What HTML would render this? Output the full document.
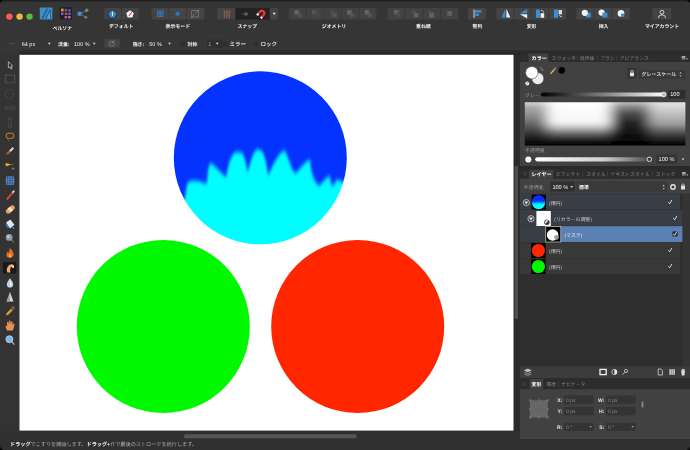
<!DOCTYPE html>
<html lang="ja">
<head>
<meta charset="utf-8">
<title>Affinity Photo</title>
<style>
html,body{margin:0;padding:0;background:#323232;}
body{width:690px;height:450px;overflow:hidden;position:relative;font-family:"Liberation Sans","Noto Sans CJK JP",sans-serif;}
svg{position:absolute;left:0;top:0;display:block;}
text{font-family:"Liberation Sans","Noto Sans CJK JP",sans-serif;text-rendering:geometricPrecision;}
svg{will-change:transform;}
.lbl{font-size:4.9px;fill:#f2f2f2;font-weight:700;text-anchor:middle;}
.opt{font-size:5.5px;fill:#f4f4f4;}
.optb{font-size:4.9px;fill:#f4f4f4;font-weight:700;}
.tab{font-size:4.9px;fill:#808080;}
.taba{font-size:5.1px;fill:#ffffff;font-weight:700;}
.dim{font-size:4.9px;fill:#9a9a9a;}
.lay{font-size:4.9px;fill:#c4c4c4;}
.val{font-size:5.6px;fill:#f6f6f6;}
.fld{font-size:5px;fill:#8c8c8c;}
.flb{font-size:5px;fill:#e8e8e8;font-weight:700;text-anchor:end;}
</style>
</head>
<body>
<svg width="690" height="450" viewBox="0 0 690 450">
<defs>
<filter id="soft" x="-10%" y="-10%" width="120%" height="120%"><feGaussianBlur stdDeviation="0.9 2.3"/></filter>
<mask id="cblue" maskUnits="userSpaceOnUse" x="170" y="68" width="182" height="180"><circle cx="260.3" cy="157.8" r="86.5" fill="#fff"/></mask>
<linearGradient id="gslide" x1="0" x2="1"><stop offset="0" stop-color="#000"/><stop offset="1" stop-color="#fff"/></linearGradient>
<linearGradient id="gop" x1="0" x2="1"><stop offset="0" stop-color="#fff"/><stop offset="0.6" stop-color="#cfcfcf"/><stop offset="1" stop-color="#4a4a4a"/></linearGradient>
<linearGradient id="gh" x1="0" x2="1">
<stop offset="0" stop-color="#8a8a8a"/><stop offset="0.08" stop-color="#a8a8a8"/><stop offset="0.17" stop-color="#f4f4f4"/><stop offset="0.5" stop-color="#f6f6f6"/><stop offset="0.58" stop-color="#a0a0a0"/><stop offset="0.66" stop-color="#585858"/><stop offset="0.74" stop-color="#8a8a8a"/><stop offset="0.85" stop-color="#c8c8c8"/><stop offset="1" stop-color="#e8e8e8"/>
</linearGradient>
<linearGradient id="gv" x1="0" y1="0" x2="0" y2="1">
<stop offset="0" stop-color="#000" stop-opacity="0"/><stop offset="0.45" stop-color="#000" stop-opacity="0.08"/><stop offset="0.7" stop-color="#000" stop-opacity="0.5"/><stop offset="0.9" stop-color="#000" stop-opacity="0.92"/><stop offset="1" stop-color="#000" stop-opacity="1"/>
</linearGradient>
<linearGradient id="gtop" x1="0" y1="0" x2="0" y2="1"><stop offset="0" stop-color="#fff" stop-opacity="0.9"/><stop offset="1" stop-color="#fff" stop-opacity="0"/></linearGradient>
<linearGradient id="gshadow" x1="0" y1="0" x2="0" y2="1"><stop offset="0" stop-color="#2f2f2f"/><stop offset="1" stop-color="#242424"/></linearGradient>
<clipPath id="gbox"><rect x="524.8" y="102.3" width="160.6" height="43.3"/></clipPath>
<filter id="hblur" filterUnits="userSpaceOnUse" x="490" y="98" width="230" height="52"><feGaussianBlur stdDeviation="6.5 0.8"/></filter>
<linearGradient id="colA" gradientUnits="userSpaceOnUse" x1="0" y1="102.3" x2="0" y2="145.6"><stop offset="0" stop-color="#d4d4d4"/><stop offset="0.12" stop-color="#a8a8a8"/><stop offset="0.35" stop-color="#868686"/><stop offset="0.6" stop-color="#505050"/><stop offset="0.85" stop-color="#1a1a1a"/><stop offset="1" stop-color="#000"/></linearGradient>
<linearGradient id="colB" gradientUnits="userSpaceOnUse" x1="0" y1="102.3" x2="0" y2="145.6"><stop offset="0" stop-color="#ffffff"/><stop offset="0.45" stop-color="#f6f6f6"/><stop offset="0.58" stop-color="#c4c4c4"/><stop offset="0.75" stop-color="#5a5a5a"/><stop offset="0.92" stop-color="#101010"/><stop offset="1" stop-color="#000"/></linearGradient>
<linearGradient id="colC" gradientUnits="userSpaceOnUse" x1="0" y1="102.3" x2="0" y2="145.6"><stop offset="0" stop-color="#c0c0c0"/><stop offset="0.1" stop-color="#8a8a8a"/><stop offset="0.28" stop-color="#484848"/><stop offset="0.5" stop-color="#222222"/><stop offset="0.75" stop-color="#101010"/><stop offset="1" stop-color="#000"/></linearGradient>
<linearGradient id="colD" gradientUnits="userSpaceOnUse" x1="0" y1="102.3" x2="0" y2="145.6"><stop offset="0" stop-color="#e4e4e4"/><stop offset="0.25" stop-color="#c2c2c2"/><stop offset="0.5" stop-color="#9c9c9c"/><stop offset="0.72" stop-color="#4a4a4a"/><stop offset="0.92" stop-color="#101010"/><stop offset="1" stop-color="#000"/></linearGradient>
<linearGradient id="thumb1" x1="0" y1="0" x2="0" y2="1"><stop offset="0" stop-color="#0433ff"/><stop offset="0.42" stop-color="#0433ff"/><stop offset="0.62" stop-color="#00e0ff"/><stop offset="0.7" stop-color="#00fdff"/><stop offset="1" stop-color="#00fdff"/></linearGradient>
</defs>

<!-- ===== base backgrounds ===== -->
<rect x="0" y="0" width="690" height="450" fill="#353535"/>
<rect x="0" y="0" width="690" height="1.6" fill="#222"/>
<rect x="0" y="34" width="690" height="16" fill="#363636"/>
<rect x="19.5" y="50" width="500.5" height="381" fill="#2a2a2a"/>
<rect x="19.5" y="50" width="670.5" height="5" fill="url(#gshadow)"/>
<rect x="0" y="55" width="19.5" height="376" fill="#333333"/>
<rect x="0" y="431" width="690" height="19" fill="#303030"/>

<!-- ===== canvas ===== -->
<g id="canvas">
<rect x="19.5" y="54.8" width="494" height="375.8" fill="#ffffff"/>
<g mask="url(#cblue)">
<rect x="170" y="68" width="182" height="180" fill="#0433ff"/>
<path filter="url(#soft)" fill="#00fdff" d="M160,260 L160,200 L184.6,200 L185.8,192 L187.6,182.5 L192,180.4 L199,181 L206.6,184 L208.2,169 L210.6,162.4 L216.4,167.8 L222,173.4 L225.9,177 L229.4,161.7 L232.6,155 L235.4,152 L242.3,152.8 L245.4,160.3 L247.5,172 L251,160 L254.4,152 L257.3,149 L262.7,151.6 L266,161.7 L268.2,175 L274.6,161.7 L280.2,153.6 L284.7,150 L288.4,158.8 L292,169 L295.6,173.4 L302,166 L306.4,161.6 L310,159.4 L311,169 L313.8,179 L318.8,186 L325.4,179 L329.7,175.4 L331,183.5 L332.8,186 L337,179.6 L342.7,182 L360,181 L360,260 Z"/>
</g>
<circle cx="163.3" cy="326.5" r="86.5" fill="#00f900"/>
<circle cx="357.7" cy="326.5" r="86.5" fill="#ff2600"/>
</g>

<g id="toolbar">
<!-- window corners -->
<path d="M0,0 H4 Q0.5,0.5 0,4 Z" fill="#000"/>
<path d="M690,0 H686 Q689.5,0.5 690,4 Z" fill="#000"/>
<path d="M0,450 H4 Q0.5,449.5 0,446 Z" fill="#000"/>
<path d="M690,450 H686 Q689.5,449.5 690,446 Z" fill="#000"/>
<!-- traffic lights -->
<circle cx="9.4" cy="16.6" r="3.2" fill="#fc5b57"/>
<circle cx="19.6" cy="16.6" r="3.2" fill="#e5bf3c"/>
<circle cx="29.5" cy="16.6" r="3.2" fill="#57c038"/>
<!-- persona icons -->
<rect x="39.8" y="7.4" width="12.6" height="12.2" rx="0.8" fill="#3f8ec6"/>
<path d="M41.2,18.6 L46.4,8.4 L48.4,8.4 L43.4,18.6 Z M45,18.6 L49.6,9.4 L51,9.4 L51,18.6 Z" fill="#27679a"/>
<path d="M46.6,18.6 L50,12 L50,18.6 Z" fill="#5aa6dc"/>
<rect x="59.8" y="7.2" width="12.2" height="12.4" rx="0.8" fill="#1f1f25"/>
<rect x="61" y="8.6" width="2.6" height="2.8" fill="#e8963a"/>
<rect x="64.6" y="8.8" width="2.6" height="2.6" fill="#5b5ec2"/>
<rect x="68.2" y="9.2" width="2.4" height="2.4" fill="#8a4fb0"/>
<rect x="61" y="12.4" width="2.6" height="2.6" fill="#7a58c0"/>
<rect x="64.8" y="12.4" width="2.6" height="2.6" fill="#d8453c"/>
<rect x="68.4" y="12.6" width="2.4" height="2.4" fill="#5668c8"/>
<rect x="64.6" y="16" width="2.6" height="2.4" fill="#b05aa8"/>
<rect x="68.2" y="16" width="2.4" height="2.4" fill="#d06a9a"/>
<path d="M79.6,13.8 L86.6,10.4 M79.6,13.8 L85.8,17.2" stroke="#6f7a80" stroke-width="0.8" fill="none"/>
<circle cx="79.6" cy="13.8" r="2.3" fill="#4a8dc4"/>
<circle cx="86.7" cy="10.3" r="1.7" fill="#7c8a7a"/>
<circle cx="85.9" cy="17.2" r="1.5" fill="#6c7680"/>
<text class="lbl" x="62.3" y="30.3">ペルソナ</text>

<!-- default group -->
<rect x="104.4" y="8" width="16.6" height="11.6" rx="1.2" fill="#444"/>
<rect x="121.8" y="8" width="16.7" height="11.6" rx="1.2" fill="#444"/>
<path d="M112.5,9.7 L116.9,12.9 L115.2,18.0 L109.8,18.0 L108.1,12.9 Z" fill="#3b8ad0" stroke="#1c2a3a" stroke-width="0.8" stroke-linejoin="round"/>
<rect x="112" y="11.8" width="1" height="4.2" rx="0.5" fill="#e8f2ff"/>
<path d="M130.0,9.7 L134.4,12.9 L132.7,18.0 L127.3,18.0 L125.6,12.9 Z" fill="#f0f0f4" stroke="#22222c" stroke-width="0.8" stroke-linejoin="round"/>
<path d="M128.4,15.8 L131.4,12 L132.2,12.7 L129.3,16.4 Z" fill="#e0584e"/>
<text class="lbl" x="121.2" y="27.7">デフォルト</text>

<!-- view mode group -->
<rect x="151.5" y="8" width="17.2" height="11.6" rx="1.2" fill="#444"/>
<rect x="169.1" y="8" width="17.2" height="11.6" fill="#444"/>
<rect x="186.7" y="8" width="17.6" height="11.6" rx="1.2" fill="#444"/>
<g stroke="#3a7fc0" stroke-width="0.8" fill="none">
<rect x="157.6" y="11" width="5.4" height="5.4" fill="#2b5a86"/>
<path d="M160.3,11 V16.4 M157.6,13.7 H163" />
</g>
<g stroke="#4a6784" stroke-width="0.5" stroke-dasharray="0.7 0.7" fill="none"><path d="M157.6,9 V18.6 M163,9 V18.6 M155.4,11 H165.2 M155.4,16.4 H165.2"/></g>
<path d="M177.6,11 L180.4,13.8 L177.6,16.6 L174.8,13.8 Z" fill="#3573ac"/>
<g stroke="#46607a" stroke-width="0.5" stroke-dasharray="0.7 0.7" fill="none"><path d="M173.6,9.4 V18.4 M181.6,9.4 V18.4 M172.4,10.4 H182.8 M172.4,17.2 H182.8"/></g>
<g stroke="#8c8c8c" stroke-width="0.6" fill="none"><rect x="191.8" y="10.6" width="6.6" height="6.4"/><path d="M190.6,18.2 L199.6,9.4"/></g>
<text class="lbl" x="177.8" y="27.7">表示モード</text>

<!-- snap group -->
<rect x="217.2" y="8" width="18" height="11.6" rx="1.2" fill="#444"/>
<rect x="235.6" y="8" width="34" height="11.6" fill="#222"/>
<rect x="270" y="8" width="8.2" height="11.6" rx="1.2" fill="#444"/>
<g stroke-width="0.8" fill="none"><path d="M224.4,10 V18 M229.4,10 V18" stroke="#d6504a"/><path d="M226.9,10 V18" stroke="#8e8e8e"/><path d="M223,12.4 H231 M223,15.6 H231" stroke="#7a5a5a" stroke-width="0.5"/></g>
<path d="M242,14 H244.4" stroke="#777" stroke-width="0.6"/><rect x="244.6" y="12.6" width="3" height="2.8" fill="#6a6a6a"/>
<g transform="translate(261.4,13.8) rotate(40)">
<path d="M-3.6,3.6 V-0.6 A3.6,3.6 0 0 1 3.6,-0.6 V3.6 H1.3 V-0.6 A1.3,1.3 0 0 0 -1.3,-0.6 V3.6 Z" fill="#e03a34"/>
<rect x="-3.6" y="2" width="2.3" height="1.8" fill="#f4f4f4"/><rect x="1.3" y="2" width="2.3" height="1.8" fill="#f4f4f4"/>
</g>
<path d="M272.6,12.8 H275.8 L274.2,15 Z" fill="#e8e8e8"/>
<text class="lbl" x="247.3" y="27.7">スナップ</text>

<!-- geometry group -->
<rect x="288.7" y="8" width="87.7" height="11.6" rx="1.2" fill="#424242"/>
<g stroke="#323232" stroke-width="0.5"><path d="M306.2,8 V19.6 M323.8,8 V19.6 M341.3,8 V19.6 M358.9,8 V19.6"/></g>
<g fill="#666666">
<rect x="294.6" y="10.2" width="4.4" height="4.4"/><rect x="297.4" y="13" width="4.2" height="4.2" fill="#525252"/>
<rect x="312" y="10.2" width="4.4" height="4.4" fill="#555"/><rect x="314.8" y="13" width="4.2" height="4.2" fill="#484848"/>
<rect x="329.8" y="10.4" width="4.2" height="4.2" fill="#4c4c4c"/><rect x="332.4" y="13" width="4.2" height="4.2" fill="#565656"/>
<rect x="347.2" y="10.2" width="4.4" height="4.4"/><rect x="350" y="13" width="4.2" height="4.2" fill="#545454"/>
<rect x="364.8" y="10.2" width="4.4" height="4.4"/><rect x="367.6" y="13" width="4.2" height="4.2" fill="#545454"/>
</g>
<text class="lbl" x="334" y="27.7">ジオメトリ</text>

<!-- order group -->
<rect x="387.4" y="8" width="71" height="11.6" rx="1.2" fill="#424242"/>
<g stroke="#323232" stroke-width="0.5"><path d="M405.2,8 V19.6 M422.9,8 V19.6 M440.6,8 V19.6"/></g>
<g fill="#606060">
<rect x="394" y="10" width="4.6" height="4.6"/><rect x="396.6" y="12.8" width="4.2" height="4.2" fill="#4c4c4c"/>
<rect x="411.6" y="10.4" width="4.2" height="4.2" fill="#4c4c4c"/><rect x="414" y="12.8" width="4.4" height="4.4"/>
<rect x="429" y="12.6" width="5" height="5"/><rect x="428.4" y="10" width="3" height="3" fill="#4c4c4c"/>
<rect x="447.2" y="11" width="4.8" height="4.8"/>
</g>
<text class="lbl" x="423.4" y="27.7">重ね順</text>

<!-- align group -->
<rect x="468" y="8" width="18.2" height="11.6" rx="1.2" fill="#444"/>
<rect x="473.6" y="9.4" width="0.9" height="8.4" fill="#f0f0f0"/>
<rect x="474.6" y="10.2" width="6.8" height="2.4" fill="#3d8dd2"/>
<rect x="474.6" y="13.6" width="4.4" height="2.2" fill="#3d8dd2"/>
<text class="lbl" x="477.4" y="27.7">整列</text>

<!-- transform group -->
<rect x="496.4" y="8" width="69.8" height="11.6" rx="1.2" fill="#444"/>
<g stroke="#323232" stroke-width="0.5"><path d="M513.9,8 V19.6 M531.4,8 V19.6 M548.8,8 V19.6"/></g>
<path d="M501.4,17.6 L505.4,8.8 L505.4,17.6 Z" fill="#3d8dd2"/><path d="M506.4,17.6 L506.4,8.8 L510.4,17.6 Z" fill="#f0f0f0"/>
<path d="M527.2,9 L527.2,13.2 L519.8,13.2 Z" fill="#3d8dd2"/><path d="M527.2,14.2 L527.2,18.4 L519.8,14.2 Z" fill="#f0f0f0"/>
<rect x="536" y="9.6" width="4" height="8.2" fill="#3d8dd2"/><rect x="540.6" y="13.2" width="3.6" height="4.6" fill="#f0f0f0"/><path d="M541,10.4 Q543.6,10.4 543.6,12.6" stroke="#f0f0f0" stroke-width="0.7" fill="none"/>
<rect x="554" y="9.6" width="4" height="8.2" fill="#3d8dd2"/><rect x="558.6" y="10" width="3.4" height="4.4" fill="#dcdcdc"/><path d="M562,16.8 Q559.4,16.8 559.4,15" stroke="#f0f0f0" stroke-width="0.7" fill="none"/>
<text class="lbl" x="531.6" y="27.7">変形</text>

<!-- insert group -->
<rect x="576.4" y="8" width="53.5" height="11.6" rx="1.2" fill="#444"/>
<g stroke="#323232" stroke-width="0.5"><path d="M594.2,8 V19.6 M612,8 V19.6"/></g>
<rect x="586" y="12.6" width="4.8" height="4.8" fill="#3d8dd2"/><circle cx="584.8" cy="12.8" r="3.1" fill="#f4f4f4"/>
<circle cx="601.6" cy="12.6" r="3.1" fill="#f4f4f4"/><rect x="602.4" y="12.6" width="5" height="5" fill="#3d8dd2"/>
<circle cx="621" cy="13.4" r="3.3" fill="#f4f4f4"/><rect x="621" y="13.6" width="3.2" height="3.4" fill="#3d8dd2"/>
<text class="lbl" x="603.6" y="27.7">挿入</text>

<!-- account -->
<rect x="652.3" y="8" width="18.9" height="11.6" rx="1.2" fill="#444"/>
<g stroke="#f0f0f0" stroke-width="0.8" fill="none"><circle cx="662" cy="12.2" r="1.9"/><path d="M658.4,18 Q658.6,14.8 662,14.8 Q665.4,14.8 665.6,18"/></g>
<text class="lbl" x="662" y="27.7">マイアカウント</text>
</g>

<g id="options">
<path d="M9.4,43.7 H15.4" stroke="#5a5a5a" stroke-width="0.7"/>
<text class="opt" x="21.7" y="45.9">64 px</text>
<path d="M47.9,42.8 H50.7 L49.3,44.8 Z" fill="#d8d8d8"/>
<text class="optb" x="58" y="45.8">流量:</text>
<text class="opt" x="74" y="45.9">100 %</text>
<path d="M92.8,42.8 H95.6 L94.2,44.8 Z" fill="#d8d8d8"/>
<rect x="104.4" y="39" width="15.2" height="8.8" rx="1" fill="#444"/>
<g stroke="#8a8a8a" stroke-width="0.7" fill="none"><circle cx="111.6" cy="43.8" r="2.6"/><path d="M111.4,44 L114.6,40.2"/></g>
<text class="optb" x="132.7" y="45.8">強さ:</text>
<text class="opt" x="149.3" y="45.9">50 %</text>
<path d="M168.2,42.8 H171 L169.6,44.8 Z" fill="#d8d8d8"/>
<rect x="180.6" y="41.2" width="4.8" height="4.8" rx="0.8" fill="#2f2f2f"/>
<text class="optb" x="187.6" y="45.8">対称</text>
<rect x="207" y="39.6" width="15" height="8.4" fill="#2f2f2f"/>
<text class="opt" x="208.2" y="45.9" style="fill:#9a9a9a">1</text>
<path d="M215.8,42.8 H218.6 L217.2,44.8 Z" fill="#d8d8d8"/>
<rect x="222.8" y="41.2" width="4.8" height="4.8" rx="0.8" fill="#2f2f2f"/>
<text class="opt" x="229.4" y="45.8" style="font-weight:500">ミラー</text>
<rect x="253.4" y="41.2" width="4.8" height="4.8" rx="0.8" fill="#2f2f2f"/>
<text class="opt" x="260.4" y="45.8" style="font-weight:500">ロック</text>
</g>

<g id="tools">
<!-- 1 arrow -->
<path d="M8.4,61.6 L8.4,68 L9.9,66.7 L11,69 L12,68.6 L10.9,66.3 L12.8,66.1 Z" fill="#2a2a2a" stroke="#d0d0d0" stroke-width="0.7"/>
<!-- 2 rect marquee -->
<rect x="5.6" y="75.2" width="9" height="7.6" fill="none" stroke="#8a8a8a" stroke-width="0.6" stroke-dasharray="1 0.8"/>
<!-- 3 ellipse marquee -->
<circle cx="9.8" cy="94" r="4.3" fill="none" stroke="#5e5e5e" stroke-width="0.7" stroke-dasharray="1 0.7"/>
<!-- 4 row marquee -->
<rect x="5.4" y="107" width="9.4" height="2" fill="none" stroke="#777" stroke-width="0.55" stroke-dasharray="1 0.7"/>
<!-- 5 col marquee -->
<rect x="8.8" y="118.4" width="2.4" height="9.4" fill="none" stroke="#777" stroke-width="0.55" stroke-dasharray="1 0.7"/>
<!-- 6 lasso -->
<ellipse cx="10" cy="135.8" rx="3.8" ry="2.7" fill="none" stroke="#b26e30" stroke-width="1.2"/>
<path d="M8,138.4 Q7.4,140.4 9,140.8" stroke="#a8642a" stroke-width="0.7" fill="none"/>
<!-- 7 brush -->
<path d="M6,154.6 Q6.4,151.6 9.2,150.6 L10.6,152 Q9.6,154.8 6,154.6 Z" fill="#9a5f34"/>
<path d="M9.2,150.6 L12.6,147 L14,148.4 L10.6,152 Z" fill="#e6d6c4"/>
<!-- 8 wand -->
<path d="M5.6,163 L11.4,164.4 L5.8,166.4 Z" fill="#e6b030"/>
<path d="M11.4,164.4 L13.2,164.6" stroke="#b08a2a" stroke-width="0.7"/>
<path d="M13,167.4 V170 M11.7,168.7 H14.3" stroke="#6a9ae0" stroke-width="0.7"/>
<!-- 9 mesh -->
<g stroke="#5b8fd8" stroke-width="0.8" fill="none"><rect x="6.4" y="177" width="7.2" height="7.2" fill="#2e4668"/><path d="M8.8,176 V185.2 M11.2,176 V185.2 M5.4,179.4 H14.6 M5.4,181.8 H14.6"/></g>
<!-- 10 red brush -->
<path d="M6.2,198.6 L11.6,192.2 L13.2,193.6 L8,199.8 Q6.6,200.2 6.2,198.6 Z" fill="#d2413c"/>
<path d="M11.6,192.2 L13.6,190 L14.8,191.2 L13.2,193.6 Z" fill="#f0c8c0"/>
<!-- 11 bandage -->
<g transform="translate(10.3,209.5) rotate(-40)"><rect x="-5.2" y="-2.4" width="10.4" height="4.8" rx="2.4" fill="#e6a45e"/><rect x="-1.6" y="-2.4" width="3.2" height="4.8" fill="#f4e0c8"/></g>
<!-- 12 bucket -->
<path d="M6,222.4 L10.4,219.6 L14.4,224.8 L10,228.4 Z" fill="#dfe6ee"/>
<path d="M6,222.4 L8.4,226.6 L10,228.4 L7,227.6 Q5.2,225 6,222.4 Z" fill="#3d7cc4"/>
<path d="M11.6,226.8 Q14.4,226.4 14.4,229 Q13.2,229.6 11.6,226.8 Z" fill="#4a8ad0"/>
<!-- 13 lens -->
<circle cx="9.2" cy="237.4" r="3.4" fill="#8e9aa6"/><circle cx="8.4" cy="236.6" r="1.6" fill="#b8c4d0"/>
<path d="M11.6,240 L13.8,242.4" stroke="#7a7a7a" stroke-width="1.1"/>
<!-- 14 flame -->
<path d="M10,248 Q13.8,251.4 13.6,254.6 Q13.4,257.6 10,257.8 Q6.4,257.6 6.4,254.4 Q6.6,252.4 8,251.2 Q8.4,252.8 9.2,253 Q9,250 10,248 Z" fill="#ee6a1e"/>
<path d="M10,253.4 Q11.8,255 11.4,256.6 Q10.8,257.6 10,257.6 Q8.6,257.4 8.6,256 Q8.8,254.6 10,253.4 Z" fill="#f8b24a"/>
<!-- 15 smudge (selected) -->
<rect x="2.8" y="262.2" width="13.6" height="11.4" rx="1" fill="#191919"/>
<path d="M7.2,272.6 Q6,268.8 8.2,266 Q10.2,263.6 12.8,264.6 Q14.6,265.6 14,267.6 Q13.2,268.4 12.2,267.6 Q11.4,266.6 10.6,267.6 Q9.8,269.4 10.4,272.6 Z" fill="#f0a878"/>
<path d="M12.2,264.6 Q14.4,265.2 14,267.4 Q13.2,268.2 12.4,267.4 Q13,266 12.2,264.6 Z" fill="#fbe4d4"/>
<!-- 16 droplet -->
<path d="M10,278.2 Q13.4,282.6 13.2,284.8 Q13,287.6 10,287.6 Q7,287.6 6.8,284.8 Q6.6,282.6 10,278.2 Z" fill="#c2d2e2"/>
<path d="M10,280.4 Q11.8,283.2 11.6,284.8 Q11.2,286.2 10,286.2 Z" fill="#eef4fa"/>
<!-- 17 cone -->
<path d="M10,292 L13.4,301.4 L6.6,301.4 Z" fill="#d4dae0"/>
<path d="M10,292 L10,301.4 L6.6,301.4 Z" fill="#9aa4ae"/>
<!-- 18 eyedropper -->
<path d="M6,315.4 L6.6,313.2 L11,308.8 L12.6,310.4 L8.2,314.8 Z" fill="#d9a43a"/>
<path d="M10.6,308.4 L12.4,306.4 Q13.8,305.6 14.6,306.6 Q15.2,307.6 14.4,308.8 L12.8,310.8 Z" fill="#7a5a3a"/>
<!-- 19 hand -->
<path d="M7,330.6 Q5.4,327.6 5.6,325.6 Q6.4,325 7.2,326.6 L7,322.2 Q7.8,321.4 8.4,322.2 L8.8,324.8 L8.9,320.8 Q9.8,320.2 10.4,320.8 L10.6,324.8 L11.2,321.6 Q12,321.2 12.6,321.8 L12.4,325.6 L13.4,323.6 Q14.2,323.4 14.6,324.2 Q13.8,328 12.8,330.6 Z" fill="#ee9050"/>
<!-- 20 zoom -->
<circle cx="9.4" cy="339.2" r="3.5" fill="#7db6f2" stroke="#c8d4e0" stroke-width="0.8"/>
<path d="M12,342 L14.4,344.6" stroke="#b0b8c0" stroke-width="1.2"/>
</g>

<g id="right">
<!-- vertical scrollbar thumb -->
<rect x="514.6" y="166" width="3.4" height="153" rx="1.2" fill="#4e4e4e"/>
<!-- colour panel -->
<rect x="520" y="53.2" width="170" height="9" fill="#2c2c2c"/>
<rect x="520" y="62" width="170" height="104" fill="#414141"/>
<rect x="528.4" y="53.6" width="20" height="8.6" fill="#414141"/>
<path d="M524.6,56.6 L523.2,58 L524.6,59.4" stroke="#3c3c3c" stroke-width="0.7" fill="none"/>
<text class="taba" x="531.6" y="59.9">カラー</text>
<text class="tab" x="551.6" y="59.8">スウォッチ</text>
<text class="tab" x="579.8" y="59.8">境界線</text>
<text class="tab" x="600.2" y="59.8">ブラシ</text>
<text class="tab" x="619.6" y="59.8">アピアランス</text>
<g stroke="#5a5a5a" stroke-width="0.4"><path d="M577.6,55.4 V60.6 M597.6,55.4 V60.6 M616.8,55.4 V60.6"/></g>
<g fill="#d8d8d8"><rect x="681.6" y="56" width="3.8" height="0.7"/><rect x="681.6" y="57.3" width="3.8" height="0.7"/><rect x="681.6" y="58.6" width="3.8" height="0.7"/><path d="M686,58.6 H688 L687,59.8 Z"/></g>
<!-- swatches -->
<circle cx="537.8" cy="78.6" r="6" fill="#ececec" stroke="#3a3a3a" stroke-width="0.5"/>
<circle cx="531.8" cy="72.7" r="6.2" fill="#ffffff" stroke="#3a3a3a" stroke-width="0.5"/>
<path d="M539.4,67.2 Q542.6,67.2 542.6,70.8 M542.6,70.8 L541.4,69.6 M542.6,70.8 L543.6,69.6" stroke="#9a9a9a" stroke-width="0.6" fill="none"/>
<circle cx="527.3" cy="83.4" r="2" fill="#f4f4f4"/><path d="M526,84.8 L528.6,82" stroke="#d8383a" stroke-width="0.7"/>
<path d="M550,73.4 L553.8,69 L554.8,70 L550.8,74.2 Z" fill="#d9c07a"/><path d="M553.6,68.8 L555.2,67 L556.6,68.4 L555,70.2 Z" fill="#9a7a3a"/>
<circle cx="561.7" cy="70.4" r="3.3" fill="#000"/>
<!-- lock + mode -->
<rect x="627.4" y="67.4" width="9.2" height="11.4" rx="1" fill="#363636"/>
<rect x="630" y="72.4" width="4" height="3.8" rx="0.4" fill="#e4e4e4"/><path d="M630.8,72.4 V71 Q632,69.4 633.2,71 V72.4" stroke="#e4e4e4" stroke-width="0.7" fill="none"/>
<rect x="638.8" y="70" width="46.6" height="8.8" rx="1" fill="#383838"/>
<text class="opt" x="641.4" y="76.4" style="font-size:5px;fill:#f2f2f2;font-weight:500">グレースケール</text>
<path d="M679.4,73.4 L680.5,72 L681.6,73.4 Z M679.4,75.4 L680.5,76.8 L681.6,75.4 Z" fill="#d0d0d0"/>
<!-- gray slider -->
<text class="dim" x="525" y="96.5">グレー</text>
<rect x="541" y="92.5" width="124.4" height="4" rx="2" fill="url(#gslide)"/>
<circle cx="663.8" cy="94.5" r="2.3" fill="#bdbdbd" stroke="#fff" stroke-width="0.8"/>
<rect x="668" y="90" width="17.4" height="8.8" rx="0.8" fill="#2e2e2e"/>
<text class="val" x="670.2" y="96.4">100</text>
<!-- gradient box -->
<g clip-path="url(#gbox)">
<g filter="url(#hblur)">
<rect x="495" y="100" width="52" height="48" fill="url(#colA)"/>
<rect x="547" y="100" width="64" height="48" fill="url(#colB)"/>
<rect x="611" y="100" width="38" height="48" fill="url(#colC)"/>
<rect x="649" y="100" width="66" height="48" fill="url(#colD)"/>
</g>
</g>
<!-- opacity -->
<text class="dim" x="525" y="152.2">不透明度</text>
<circle cx="528.3" cy="159.6" r="3" fill="#ffffff"/>
<rect x="535.2" y="157.2" width="115.6" height="4.2" rx="2.1" fill="url(#gop)"/>
<circle cx="649.4" cy="159.3" r="2.2" fill="#3a3a3a" stroke="#fff" stroke-width="0.8"/>
<rect x="656.4" y="154.6" width="21" height="9.4" rx="0.8" fill="#353535"/>
<text class="val" x="658.6" y="161.2">100 %</text>
<path d="M681.6,158.4 H684.4 L683,160.4 Z" fill="#d8d8d8"/>

<!-- layers panel -->
<rect x="520" y="166" width="170" height="3.4" fill="#292929"/>
<rect x="520" y="169.4" width="170" height="9.4" fill="#2c2c2c"/>
<rect x="520" y="178.8" width="170" height="15" fill="#414141"/>
<rect x="529" y="169.8" width="24.2" height="9" fill="#414141"/>
<rect x="523" y="171.6" width="3.8" height="3.8" rx="0.6" fill="#3a3a3a"/>
<text class="taba" x="531.4" y="176">レイヤー</text>
<text class="tab" x="555.6" y="175.9">エフェクト</text>
<text class="tab" x="586.2" y="175.9">スタイル</text>
<text class="tab" x="610.6" y="175.9">テキストスタイル</text>
<text class="tab" x="655.8" y="175.9">ストック</text>
<g stroke="#5a5a5a" stroke-width="0.4"><path d="M582.8,171.4 V176.8 M607.6,171.4 V176.8 M652.6,171.4 V176.8"/></g>
<g fill="#d8d8d8"><rect x="682" y="172" width="3.8" height="0.7"/><rect x="682" y="173.3" width="3.8" height="0.7"/><rect x="682" y="174.6" width="3.8" height="0.7"/><path d="M686.4,174.6 H688.4 L687.4,175.8 Z"/></g>
<text class="dim" x="523.6" y="188.5">不透明度:</text>
<rect x="550.4" y="181.6" width="24.6" height="10.2" rx="0.8" fill="#303030"/>
<text class="val" x="552.4" y="188.6">100 %</text>
<path d="M570.4,186 H573.2 L571.8,188 Z" fill="#d8d8d8"/>
<rect x="576.4" y="181.6" width="90.4" height="10.2" rx="0.8" fill="#3a3a3a"/>
<text class="opt" x="579" y="188.5" style="font-weight:700;font-size:4.9px">標準</text>
<path d="M662.6,186.2 L663.7,184.8 L664.8,186.2 Z M662.6,188.2 L663.7,189.6 L664.8,188.2 Z" fill="#d8d8d8"/>
<circle cx="673" cy="187" r="2.2" fill="none" stroke="#e0e0e0" stroke-width="1.4"/>
<rect x="681" y="185.6" width="4" height="4" rx="0.4" fill="#e0e0e0"/><path d="M681.8,185.6 V184.6 Q683,183 684.2,184.6 V185.6" stroke="#e0e0e0" stroke-width="0.7" fill="none"/>

<!-- layer list -->
<rect x="520" y="193.8" width="170" height="172.6" fill="#2e2e2e"/><rect x="682.6" y="193.8" width="7.4" height="172.6" fill="#343434"/>
<rect x="520" y="194" width="160" height="15.6" fill="#393d45"/>
<rect x="520" y="210" width="162.4" height="15.7" fill="#393d45"/>
<rect x="520" y="226" width="162.4" height="16" fill="#393d45"/>
<rect x="561" y="226.2" width="121.4" height="15.8" fill="#5b80b4"/>
<rect x="520" y="242.4" width="160" height="15.6" fill="#383838"/>
<rect x="520" y="258.4" width="160" height="15.6" fill="#383838"/>
<!-- row1 -->
<circle cx="526.3" cy="202.6" r="3.1" fill="none" stroke="#e6e6e6" stroke-width="0.7"/><path d="M524.3,201.4 H528.3 L526.3,204.6 Z" fill="#e6e6e6"/>
<rect x="531.6" y="194.6" width="14.2" height="15" fill="#000"/>
<ellipse cx="538.6" cy="202.2" rx="6.7" ry="7" fill="url(#thumb1)"/>
<text class="lay" x="549" y="204.5">(楕円)</text>
<!-- row2 -->
<circle cx="531" cy="218.7" r="3.1" fill="none" stroke="#e6e6e6" stroke-width="0.7"/><path d="M529,217.5 H533 L531,220.7 Z" fill="#e6e6e6"/>
<rect x="536.4" y="211" width="14.4" height="15" fill="#ffffff"/>
<circle cx="546.9" cy="222.2" r="2.7" fill="#3a3a3a"/><path d="M545.3,223.8 A2.3,2.3 0 0 1 548.5,220.6 Z" fill="#e8e8e8"/>
<text class="lay" x="554.3" y="220.6">(リカラーの調整)</text>
<!-- row3 -->
<rect x="545.8" y="226.6" width="15" height="15.4" fill="#000" stroke="#e8e8e8" stroke-width="0.6"/>
<circle cx="552.6" cy="235" r="5.8" fill="#ffffff"/><circle cx="556.5" cy="237.4" r="2.3" fill="#a0a0a0"/>
<text class="lay" x="564.4" y="236.8" style="fill:#e6ecf4">(マスク)</text>
<!-- row4 -->
<rect x="531.2" y="243" width="14.4" height="15" fill="#000"/><circle cx="538.4" cy="250.5" r="6.6" fill="#ff2600"/>
<text class="lay" x="549" y="252.8">(楕円)</text>
<!-- row5 -->
<rect x="531.2" y="259" width="14.4" height="15" fill="#000"/><circle cx="538.4" cy="266.5" r="6.6" fill="#00f900"/>
<text class="lay" x="549" y="268.8">(楕円)</text>
<!-- checks -->
<g stroke="#ececec" stroke-width="0.9" fill="none" stroke-linecap="round">
<path d="M668.6,202.6 L669.6,203.8 L671.6,200.4"/>
<path d="M673.6,218.6 L674.6,219.8 L676.6,216.4"/>
<path d="M668.6,250.6 L669.6,251.8 L671.6,248.4"/>
<path d="M668.6,266.6 L669.6,267.8 L671.6,264.4"/>
</g>
<rect x="672.4" y="231.2" width="5.4" height="5.4" rx="1" fill="#2a2f38"/>
<path d="M673.6,234.2 L674.6,235.4 L676.6,232" stroke="#ececec" stroke-width="0.9" fill="none" stroke-linecap="round"/>

<!-- layers footer -->
<rect x="520" y="366.4" width="170" height="11.6" fill="#3c3c3c"/>
<g stroke="#c8c8c8" stroke-width="0.6" fill="none"><path d="M524.4,370.4 L527.8,369 L531.2,370.4 L527.8,371.8 Z" fill="#c8c8c8"/><path d="M524.4,372.2 L527.8,373.6 L531.2,372.2 M524.4,374 L527.8,375.4 L531.2,374"/></g>
<rect x="600" y="369.4" width="6.2" height="5.2" fill="none" stroke="#f0f0f0" stroke-width="1.3"/>
<circle cx="614.4" cy="372" r="2.6" fill="none" stroke="#e8e8e8" stroke-width="0.7"/><path d="M614.4,369.4 A2.6,2.6 0 0 1 614.4,374.6 Z" fill="#e8e8e8"/>
<g stroke="#e0e0e0" stroke-width="0.7" fill="none"><circle cx="626" cy="371" r="1.6"/><path d="M624.8,372.2 L622.4,374.8"/></g>
<path d="M658.2,369 H661 L662.4,370.4 V375 H658.2 Z" fill="none" stroke="#e6e6e6" stroke-width="0.7"/>
<g fill="#dcdcdc"><rect x="669.4" y="369.2" width="1.4" height="5.6"/><rect x="671.4" y="369.2" width="1.4" height="5.6"/><rect x="673.4" y="369.2" width="1.4" height="5.6"/></g>
<path d="M681,370.4 H685.2 M682,370.4 V369.4 H684.2 V370.4 M681.6,371 L682,375.2 H684.2 L684.6,371 Z" fill="#dcdcdc" stroke="#dcdcdc" stroke-width="0.6"/>

<!-- transform panel -->
<rect x="520" y="378" width="170" height="11.2" fill="#2c2c2c"/>
<rect x="520" y="389.2" width="170" height="49.4" fill="#414141"/><rect x="520" y="437.6" width="170" height="1.2" fill="#464646"/>
<rect x="529.6" y="379" width="13.6" height="10.4" fill="#414141"/>
<rect x="522.6" y="382.2" width="3.6" height="3.6" rx="0.6" fill="#3a3a3a"/>
<text class="taba" x="531.6" y="386.4" style="font-size:4.9px">変形</text>
<text class="tab" x="546.4" y="386.3">履歴</text>
<text class="tab" x="561" y="386.3">ナビゲータ</text>
<g stroke="#5a5a5a" stroke-width="0.4"><path d="M558.4,381.6 V387.2"/></g>
<rect x="530" y="400.2" width="17.8" height="17.4" rx="0.6" fill="#676767"/>
<g fill="#6e6e6e"><circle cx="530.4" cy="400.6" r="1.3"/><circle cx="538.9" cy="400.4" r="1.2"/><circle cx="547.4" cy="400.6" r="1.3"/><circle cx="530.2" cy="408.9" r="1.2"/><circle cx="547.6" cy="408.9" r="1.2"/><circle cx="530.4" cy="417.2" r="1.3"/><circle cx="538.9" cy="417.4" r="1.2"/><circle cx="547.4" cy="417.2" r="1.3"/></g>
<path d="M537.6,408 H540.2 L538.9,410 Z" fill="#5c5c5c"/>
<text class="flb" x="562.2" y="401.8">X:</text>
<rect x="564" y="395.6" width="29.6" height="8.4" rx="0.8" fill="#343434"/><text class="fld" x="566" y="401.7">0 px</text>
<text class="flb" x="562.2" y="413.2">Y:</text>
<rect x="564" y="407" width="29.6" height="8.2" rx="0.8" fill="#343434"/><text class="fld" x="566" y="413.1">0 px</text>
<text class="flb" x="604.2" y="401.8">W:</text>
<rect x="606" y="395.6" width="29.6" height="8.4" rx="0.8" fill="#343434"/><text class="fld" x="608" y="401.7">0 px</text>
<text class="flb" x="604.2" y="413.2">H:</text>
<rect x="606" y="407" width="29.6" height="8.2" rx="0.8" fill="#343434"/><text class="fld" x="608" y="413.1">0 px</text>
<rect x="641.6" y="401.4" width="1.8" height="6" rx="0.6" fill="#8a8a8a"/>
<text class="flb" x="562.2" y="429">R:</text>
<rect x="564" y="422.8" width="29.6" height="8.2" rx="0.8" fill="#343434"/><text class="fld" x="566" y="428.9">0 °</text>
<path d="M589.4,426 H592 L590.7,427.8 Z" fill="#9a9a9a"/>
<text class="flb" x="604.2" y="429">S:</text>
<rect x="606" y="422.8" width="29.6" height="8.2" rx="0.8" fill="#343434"/><text class="fld" x="608" y="428.9">0 °</text>
<path d="M631.4,426 H634 L632.7,427.8 Z" fill="#9a9a9a"/>
</g>

<g id="status">
<rect x="184" y="434.2" width="172.6" height="4" rx="1.6" fill="#555555"/>
<text x="10" y="446.4" style="font-size:5.15px;fill:#a8a8a8"><tspan style="fill:#f4f4f4;font-weight:700">ドラッグ</tspan>でこすりを開始します。<tspan style="fill:#f4f4f4;font-weight:700">ドラッグ+⇧</tspan>で最後のストロークを続行します。</text>
</g>

</svg>
</body>
</html>
